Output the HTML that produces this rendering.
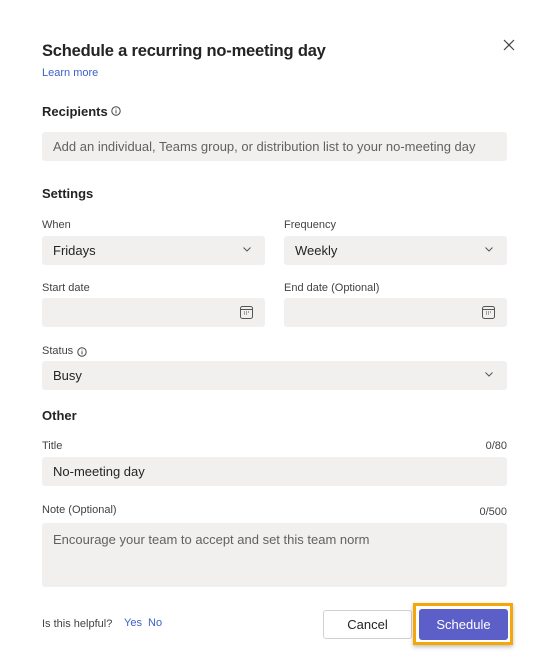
<!DOCTYPE html>
<html><head><style>
*{box-sizing:border-box;margin:0;padding:0}
body{width:544px;height:667px;background:#fff;font-family:"Liberation Sans",sans-serif;color:#242424;position:relative;overflow:hidden}
.a{position:absolute}
.f{position:absolute;background:#f1f0ef;border-radius:3px;font-size:13px;color:#242424;padding-left:11px;display:flex;align-items:center}
.lb{position:absolute;font-size:11px;color:#424242}
.h{position:absolute;font-size:13px;font-weight:bold;color:#242424}
.chev{position:absolute;right:14px;top:11px}
.cal{position:absolute;right:12px;top:8px}
</style></head><body>
<div class="a" style="left:42px;top:42px;font-size:16.5px;font-weight:bold;letter-spacing:-0.2px">Schedule a recurring no-meeting day</div>
<div class="a" style="left:42px;top:67px;font-size:11px;color:#3b62c8">Learn more</div>
<svg class="a" style="left:503px;top:39px" width="12" height="12" viewBox="0 0 12 12"><path d="M1 1L11 11M11 1L1 11" stroke="#444" stroke-width="1.2"/></svg>
<div class="h" style="top:104px;left:42px">Recipients</div>
<svg class="a" style="left:111px;top:106px" width="10" height="10" viewBox="0 0 10 10"><circle cx="5" cy="5" r="4.2" fill="none" stroke="#444" stroke-width="1"/><path d="M5 4.2V7.4M5 2.6v.8" stroke="#444" stroke-width="1"/></svg>
<div class="f" style="left:42px;top:132px;width:465px;height:29px;color:#616161">Add an individual, Teams group, or distribution list to your no-meeting day</div>
<div class="h" style="top:186px;left:42px">Settings</div>
<div class="lb" style="left:42px;top:219px">When</div>
<div class="lb" style="left:284px;top:219px">Frequency</div>
<div class="f" style="left:42px;top:236px;width:223px;height:29px">Fridays<svg class="chev" width="8" height="5" viewBox="0 0 8 5"><path d="M.5 .5L4 4 7.5.5" fill="none" stroke="#555"/></svg></div>
<div class="f" style="left:284px;top:236px;width:223px;height:29px">Weekly<svg class="chev" width="8" height="5" viewBox="0 0 8 5"><path d="M.5 .5L4 4 7.5.5" fill="none" stroke="#555"/></svg></div>
<div class="lb" style="left:42px;top:282px">Start date</div>
<div class="lb" style="left:284px;top:282px">End date (Optional)</div>
<div class="f" style="left:42px;top:298px;width:223px;height:29px"><svg class="cal" width="13" height="13" viewBox="0 0 13 13"><rect x=".5" y=".5" width="12" height="12" rx="2" fill="none" stroke="#555"/><path d="M.5 3.5h12" stroke="#555"/><path d="M4 6h1M6 6h1M8 6h1M4 8h1M6 8h1" stroke="#555"/></svg></div>
<div class="f" style="left:284px;top:298px;width:223px;height:29px"><svg class="cal" width="13" height="13" viewBox="0 0 13 13"><rect x=".5" y=".5" width="12" height="12" rx="2" fill="none" stroke="#555"/><path d="M.5 3.5h12" stroke="#555"/><path d="M4 6h1M6 6h1M8 6h1M4 8h1M6 8h1" stroke="#555"/></svg></div>
<div class="lb" style="left:42px;top:345px">Status</div>
<svg class="a" style="left:77px;top:347px" width="10" height="10" viewBox="0 0 10 10"><circle cx="5" cy="5" r="4.2" fill="none" stroke="#444" stroke-width="1"/><path d="M5 4.2V7.4M5 2.6v.8" stroke="#444" stroke-width="1"/></svg>
<div class="f" style="left:42px;top:361px;width:465px;height:29px">Busy<svg class="chev" width="8" height="5" viewBox="0 0 8 5"><path d="M.5 .5L4 4 7.5.5" fill="none" stroke="#555"/></svg></div>
<div class="h" style="top:408px;left:42px">Other</div>
<div class="lb" style="left:42px;top:440px">Title</div>
<div class="lb" style="right:37px;top:440px">0/80</div>
<div class="f" style="left:42px;top:457px;width:465px;height:29px">No-meeting day</div>
<div class="lb" style="left:42px;top:504px">Note (Optional)</div>
<div class="lb" style="right:37px;top:506px">0/500</div>
<div class="f" style="left:42px;top:523px;width:465px;height:64px;align-items:flex-start;padding-top:9px;color:#616161">Encourage your team to accept and set this team norm</div>
<div class="a" style="left:42px;top:618px;font-size:11px;color:#424242">Is this helpful?</div>
<div class="a" style="left:124px;top:617px;font-size:11px;color:#3b62c8">Yes</div>
<div class="a" style="left:148px;top:617px;font-size:11px;color:#3b62c8">No</div>
<div class="a" style="left:323px;top:610px;width:89px;height:29px;border:1px solid #d1d1d1;border-radius:3px;font-size:13px;display:flex;align-items:center;justify-content:center">Cancel</div>
<div class="a" style="left:413px;top:603px;width:100px;height:42px;border:3px solid #f5a70a;box-shadow:0 2px 4px rgba(0,0,0,.25)"></div>
<div class="a" style="left:419px;top:609px;width:89px;height:31px;background:#5b5fc7;border-radius:3px;color:#fff;font-size:13px;display:flex;align-items:center;justify-content:center">Schedule</div>
</body></html>
